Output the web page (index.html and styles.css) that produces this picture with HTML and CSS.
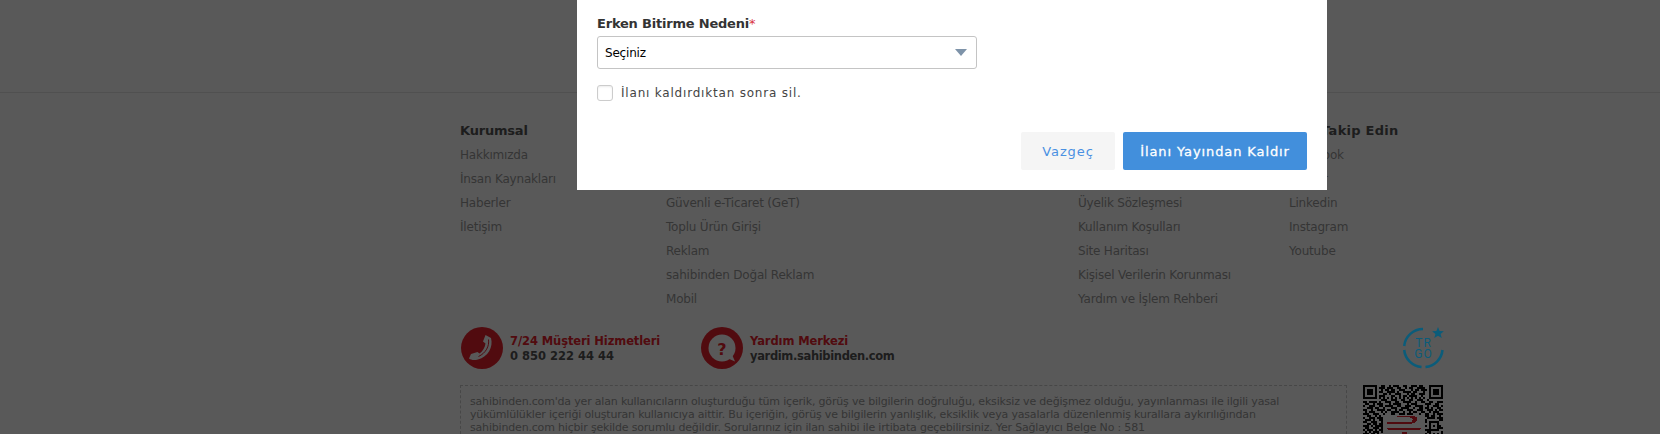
FILE: index.html
```html
<!DOCTYPE html>
<html lang="tr">
  <head>
    <meta charset="UTF-8" />
    <title>İlanı Yayından Kaldır</title>
    <link rel="stylesheet" href="styles.css">
  </head>
  <body>
    <div class="top-area"></div>

    <footer class="footer">
      <div class="link-cols">
        <div class="link-col">
          <h4>Kurumsal</h4>
          <a>Hakkımızda</a>
          <a>İnsan Kaynakları</a>
          <a>Haberler</a>
          <a>İletişim</a>
        </div>
        <div class="link-col link-col-lower">
          <a>Güvenli e-Ticaret (GeT)</a>
          <a>Toplu Ürün Girişi</a>
          <a>Reklam</a>
          <a>sahibinden Doğal Reklam</a>
          <a>Mobil</a>
        </div>
        <div class="link-col"></div>
        <div class="link-col link-col-lower">
          <a>Üyelik Sözleşmesi</a>
          <a>Kullanım Koşulları</a>
          <a>Site Haritası</a>
          <a>Kişisel Verilerin Korunması</a>
          <a>Yardım ve İşlem Rehberi</a>
        </div>
        <div class="link-col">
          <h4>Bizi Takip Edin</h4>
          <a>Facebook</a>
          <a>Twitter</a>
          <a>Linkedin</a>
          <a>Instagram</a>
          <a>Youtube</a>
        </div>
      </div>

      <div class="contact-row">
        <div class="contact">
          <svg class="contact-icon" viewBox="0 0 42 42">
            <circle cx="21" cy="21" r="21" fill="#e8202c" />
            <path d="M24.500 8L30 11C32.500 20 27 30 17 32.500C13 33.500 10 33 8 31.500L10 27L16.500 25L18.500 26.500C21.500 24.500 24 20.500 24.500 16.500L22 14.500Z" fill="#fff" />
            <path d="M27.500 12.500C28.500 19 25 26 17.500 29.500" fill="none" stroke="#e8202c" />
          </svg>
          <div>
            <div class="contact-title">7/24 Müşteri Hizmetleri</div>
            <div class="contact-value">0 850 222 44 44</div>
          </div>
        </div>
        <div class="contact">
          <svg class="contact-icon" viewBox="0 0 42 42">
            <circle cx="21" cy="21" r="21" fill="#e8202c" />
            <circle cx="21" cy="21" r="13.500" fill="#fff" />
            <path d="M26 31l8 3.500-3.500-8z" fill="#fff" />
            <text x="21" y="28" text-anchor="middle" class="help-mark">?</text>
          </svg>
          <div>
            <div class="contact-title">Yardım Merkezi</div>
            <div class="contact-value contact-value-tight">yardim.sahibinden.com</div>
          </div>
        </div>
        <svg class="trgo" viewBox="0 0 41 42">
          <path d="M20 2A19 19 0 0 0 1.200 19M1.200 23A19 19 0 0 0 18.500 40M22.500 40A19 19 0 0 0 39.500 23" fill="none" stroke="#0b5c7a" stroke-width="2.500" />
          <path d="M35 0l1.600 4 4.300.2-3.300 2.700 1.100 4.200-3.700-2.300-3.700 2.300 1.100-4.200-3.300-2.700 4.300-.2z" fill="#0b5c7a" />
          <text x="20.500" y="20" text-anchor="middle" class="trgo-text">TR</text>
          <text x="20.500" y="31" text-anchor="middle" class="trgo-text">GO</text>
        </svg>
      </div>

      <div class="notice-row">
        <p class="notice">
          sahibinden.com'da yer alan kullanıcıların oluşturduğu tüm içerik, görüş ve bilgilerin doğruluğu, eksiksiz ve değişmez olduğu, yayınlanması ile ilgili yasal<br>
          yükümlülükler içeriği oluşturan kullanıcıya aittir. Bu içeriğin, görüş ve bilgilerin yanlışlık, eksiklik veya yasalarla düzenlenmiş kurallara aykırılığından<br>
          sahibinden.com hiçbir şekilde sorumlu değildir. Sorularınız için ilan sahibi ile irtibata geçebilirsiniz. Yer Sağlayıcı Belge No : 581
        </p>
        <svg class="qr" viewBox="0 0 40 24.500" shape-rendering="crispEdges">
          <path fill="none" stroke="#000" d="M0 .5h7M9 .5h2M13 .5h1M15 .5h3M20 .5h2M24 .5h3M28 .5h2M33 .5h7M0 1.500h1M6 1.500h1M8 1.500h3M12 1.500h3M17 1.500h2M21 1.500h1M23 1.500h2M27 1.500h4M33 1.500h1M39 1.500h1M0 2.500h1M2 2.500h3M6 2.500h1M9 2.500h1M11 2.500h2M14 2.500h2M18 2.500h3M24 2.500h1M26 2.500h2M29 2.500h3M33 2.500h1M35 2.500h3M39 2.500h1M0 3.500h1M2 3.500h3M6 3.500h1M8 3.500h2M12 3.500h4M17 3.500h1M20 3.500h4M25 3.500h2M30 3.500h1M33 3.500h1M35 3.500h3M39 3.500h1M0 4.500h1M2 4.500h3M6 4.500h1M10 4.500h2M13 4.500h1M16 4.500h3M22 4.500h1M24 4.500h2M28 4.500h3M33 4.500h1M35 4.500h3M39 4.500h1M0 5.500h1M6 5.500h1M8 5.500h3M14 5.500h2M18 5.500h1M20 5.500h2M23 5.500h4M29 5.500h1M33 5.500h1M39 5.500h1M0 6.500h7M8 6.500h1M10 6.500h1M12 6.500h1M14 6.500h1M16 6.500h1M18 6.500h1M20 6.500h1M22 6.500h1M24 6.500h1M26 6.500h1M28 6.500h1M30 6.500h1M33 6.500h7M9 7.500h3M14 7.500h3M19 7.500h2M23 7.500h2M27 7.500h3M32 7.500h1M0 8.500h2M3 8.500h4M8 8.500h1M11 8.500h3M16 8.500h2M20 8.500h4M26 8.500h1M29 8.500h2M33 8.500h2M37 8.500h3M1 9.500h2M5 9.500h1M7 9.500h3M13 9.500h1M15 9.500h4M22 9.500h1M24 9.500h3M31 9.500h3M36 9.500h2M0 10.500h1M3 10.500h3M8 10.500h2M11 10.500h4M17 10.500h2M21 10.500h3M26 10.500h4M32 10.500h1M35 10.500h3M39 10.500h1M2 11.500h3M6 11.500h2M10 11.500h1M14 11.500h3M19 11.500h4M25 11.500h1M28 11.500h2M31 11.500h2M34 11.500h1M37 11.500h2M0 12.500h2M4 12.500h1M7 12.500h4M12 12.500h2M16 12.500h1M18 12.500h2M22 12.500h3M27 12.500h3M32 12.500h3M36 12.500h1M38 12.500h2M1 13.500h1M3 13.500h3M9 13.500h1M11 13.500h1M14 13.500h4M20 13.500h1M23 13.500h1M25 13.500h2M29 13.500h2M33 13.500h1M35 13.500h3M0 14.500h3M5 14.500h3M10 14.500h1M14 14.500h2M18 14.500h3M22 14.500h3M28 14.500h1M31 14.500h2M35 14.500h1M37 14.500h3M2 15.500h2M6 15.500h1M8 15.500h1M31 15.500h2M34 15.500h2M38 15.500h1M0 16.500h1M3 16.500h3M7 16.500h3M32 16.500h4M37 16.500h3M1 17.500h3M5 17.500h1M8 17.500h2M31 17.500h1M38 17.500h2M0 18.500h2M4 18.500h3M9 18.500h1M31 18.500h1M33 18.500h5M2 19.500h2M5 19.500h2M8 19.500h2M33 19.500h1M37 19.500h1M0 20.500h3M4 20.500h1M6 20.500h4M31 20.500h1M33 20.500h1M35 20.500h1M37 20.500h2M1 21.500h2M5 21.500h3M9 21.500h1M33 21.500h1M37 21.500h3M0 22.500h1M2 22.500h3M6 22.500h1M8 22.500h2M31 22.500h2M33 22.500h5M1 23.500h1M3 23.500h1M5 23.500h3M9 23.500h1M32 23.500h2M39 23.500h1M0 24.500h3M4 24.500h2M7 24.500h1M31 24.500h1M33 24.500h1M35 24.500h1M37 24.500h1M39 24.500h1" />
          <path d="M16.800 15.500H25C27 15.500 27.500 17 26.800 17.800C26 19 25 19.300 24.300 19.300H11.800V18.700H23C24.500 18.700 25 17.800 24.800 17C24.500 16.300 24 16.200 23 16.200H16.800Z" fill="#e31e2d" />
          <path d="M11.800 21.400H29.300C29 22.200 28 22.600 26.500 22.600H14C12.800 22.600 12 22.200 11.800 21.400Z" fill="#e31e2d" />
          <rect x="19.500" y="23.500" width="2.500" height="1" fill="#e31e2d" />
        </svg>
      </div>
    </footer>

    <div class="overlay">
      <div class="modal">
        <label class="field-label">Erken Bitirme Nedeni<span class="required">*</span></label>
        <div class="select">
          <span>Seçiniz</span>
          <i class="select-arrow"></i>
        </div>
        <div class="check-row">
          <span class="checkbox"></span>
          <span class="check-text">İlanı kaldırdıktan sonra sil.</span>
        </div>
        <div class="modal-actions">
          <button class="btn btn-cancel">Vazgeç</button>
          <button class="btn btn-primary">İlanı Yayından Kaldır</button>
        </div>
      </div>
    </div>
  </body>
</html>
```

FILE: styles.css
```css
* {
  margin: 0;
  padding: 0;
  box-sizing: border-box;
}

html,
body {
  height: 434px;
  overflow: hidden;
}

body {
  position: relative;
  background: #fff;
  font-family: "DejaVu Sans", sans-serif;
  font-size: 12px;
  color: #333;
}

.top-area {
  height: 93px;
  border-bottom: 1px solid #e5e5e5;
}

.footer {
  width: 984px;
  margin-left: 460px;
}

.link-cols {
  display: grid;
  grid-template-columns: 206px 206px 206px 211px 155px;
  height: 234px;
  padding-top: 26px;
}

.link-col h4 {
  font-size: 13px;
  font-weight: bold;
  line-height: 24px;
  letter-spacing: -0.2px;
  color: #555;
}

.link-col:last-child h4 {
  letter-spacing: 0.25px;
}

.link-col a {
  display: block;
  line-height: 24px;
  letter-spacing: -0.2px;
  color: #999;
}

/* rows above these are behind the modal */
.link-col-lower {
  padding-top: 72px;
}

.contact-row {
  display: flex;
  height: 58px;
  padding-left: 1px;
}

.contact {
  display: flex;
  gap: 7px;
  width: 240px;
}

.contact-icon {
  width: 42px;
  height: 42px;
}

.contact-title {
  margin-top: 7px;
  font-size: 11.500px;
  line-height: 15px;
  font-weight: bold;
  letter-spacing: -0.1px;
  color: #e8202c;
}

.contact-value {
  font-size: 11.500px;
  line-height: 15px;
  font-weight: bold;
  color: #555;
}

.contact-value-tight {
  letter-spacing: -0.35px;
}

.help-mark {
  font-size: 16px;
  font-weight: bold;
  fill: #e8202c;
}

.trgo {
  position: relative;
  z-index: 2;
  width: 41px;
  height: 42px;
  margin-left: auto;
  overflow: visible;
}

.trgo-text {
  font-family: Roboto, sans-serif;
  font-size: 12px;
  letter-spacing: 1px;
  fill: #0b5c7a;
}

.notice-row {
  display: flex;
  justify-content: space-between;
  height: 49px;
  overflow: hidden;
}

.notice {
  width: 887px;
  height: 49px;
  padding: 9px 9px 0;
  border: 1px dashed #ccc;
  border-bottom: 0;
  font-size: 11px;
  line-height: 13px;
  letter-spacing: -0.18px;
  color: #999;
  white-space: nowrap;
}

.qr {
  width: 80px;
  height: 49px;
  margin-right: 1px;
}

/* modal on top of everything */
.overlay {
  position: absolute;
  top: 0;
  left: 0;
  width: 100%;
  height: 100%;
  background: rgba(0, 0, 0, 0.65);
}

.modal {
  position: absolute;
  top: 0;
  left: 577px;
  width: 750px;
  height: 190px;
  padding: 14px 20px 0;
  background: #fff;
}

.field-label {
  display: block;
  margin-bottom: 2px;
  font-size: 13px;
  font-weight: bold;
  line-height: 20px;
  letter-spacing: -0.2px;
  color: #333;
}

.required {
  font-weight: normal;
  color: #d9343f;
}

.select {
  display: flex;
  align-items: center;
  justify-content: space-between;
  width: 380px;
  height: 33px;
  padding: 0 9px 0 7px;
  border: 1px solid #c4c4c4;
  border-radius: 3px;
  letter-spacing: -0.2px;
  color: #000;
}

.select-arrow {
  width: 0;
  height: 0;
  border-left: 6.500px solid transparent;
  border-right: 6.500px solid transparent;
  border-top: 7px solid #7e93a9;
}

.check-row {
  display: flex;
  align-items: center;
  gap: 8px;
  margin-top: 16px;
}

.checkbox {
  width: 16px;
  height: 16px;
  border: 1px solid #ccc;
  border-radius: 3px;
  box-shadow: inset 0 1px 2px rgba(0, 0, 0, 0.08);
}

.check-text {
  font-size: 12px;
  letter-spacing: 0.8px;
  color: #444;
}

.modal-actions {
  display: flex;
  justify-content: flex-end;
  gap: 8px;
  margin-top: 31px;
}

.btn {
  height: 38px;
  border: 0;
  border-radius: 2px;
  font-family: inherit;
  font-size: 13px;
  letter-spacing: 0.9px;
}

.btn-cancel {
  width: 94px;
  background: #f5f5f5;
  color: #4a90e2;
}

.btn-primary {
  width: 184px;
  background: #428fdc;
  color: #fff;
  -webkit-text-stroke: 0.3px #fff;
}
```
